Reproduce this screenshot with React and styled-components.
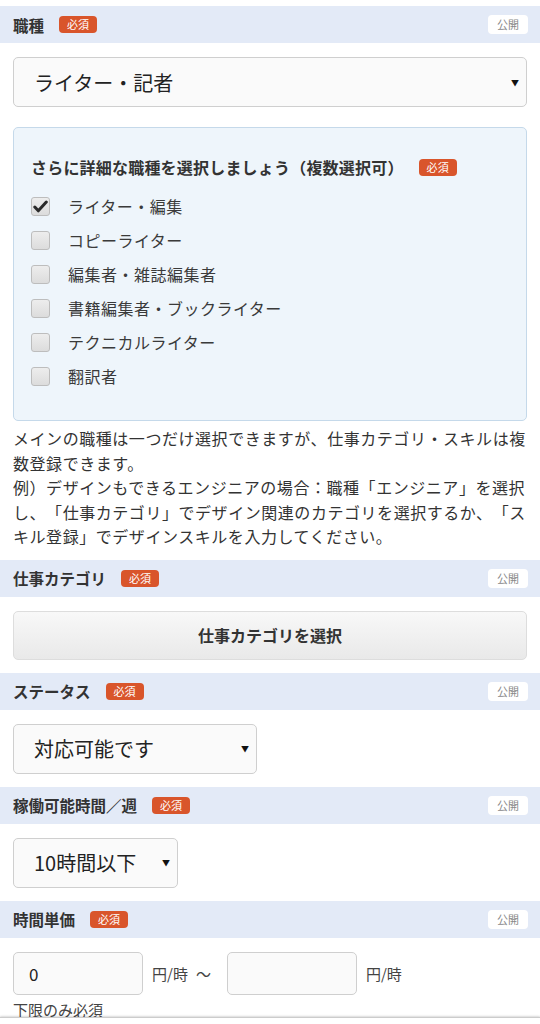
import React from "react";
import styled, { createGlobalStyle } from "styled-components";

const GlobalStyle = createGlobalStyle`
  body {
    margin: 0;
    background: #ffffff;
    font-family: "Noto Sans CJK JP", "Noto Sans", sans-serif;
    color: #333333;
    text-spacing-trim: space-all;
  }
`;

const jobs = [
  { label: "ライター・編集", checked: true },
  { label: "コピーライター" },
  { label: "編集者・雑誌編集者" },
  { label: "書籍編集者・ブックライター" },
  { label: "テクニカルライター" },
  { label: "翻訳者" },
];

const Section = ({ title, children }) => (
  <>
    <Header>
      <HeaderTitle>
        {title}
        <Required>必須</Required>
      </HeaderTitle>
      <PublicTag>公開</PublicTag>
    </Header>
    <Body>{children}</Body>
  </>
);

const App = () => {
  return (
    <Page>
      <GlobalStyle />
      <Section title="職種">
        <Select $width="100%">
          <span>ライター・記者</span>
          <Arrow>▼</Arrow>
        </Select>
        <DetailBox>
          <DetailTitle>
            さらに詳細な職種を選択しましょう（複数選択可）
            <Required>必須</Required>
          </DetailTitle>
          {jobs.map((job) => (
            <CheckRow key={job.label}>
              <CheckBox>
                {job.checked && (
                  <svg width="15" height="13" viewBox="0 0 15 13">
                    <path d="M1.8 7 L5.3 10.8 L13.3 2" fill="none" stroke="#2a2a2a" strokeWidth="3" strokeLinecap="round" strokeLinejoin="round" />
                  </svg>
                )}
              </CheckBox>
              {job.label}
            </CheckRow>
          ))}
        </DetailBox>
        <Note>
          メインの職種は一つだけ選択できますが、仕事カテゴリ・スキルは複数登録できます。
          <br />
          例）デザインもできるエンジニアの場合：職種「エンジニア」を選択し、「仕事カテゴリ」でデザイン関連のカテゴリを選択するか、「スキル登録」でデザインスキルを入力してください。
        </Note>
      </Section>

      <Section title="仕事カテゴリ">
        <CategoryButton>仕事カテゴリを選択</CategoryButton>
      </Section>

      <Section title="ステータス">
        <Select $width="244px">
          <span>対応可能です</span>
          <Arrow>▼</Arrow>
        </Select>
      </Section>

      <Section title="稼働可能時間／週">
        <Select $width="165px">
          <span>10時間以下</span>
          <Arrow>▼</Arrow>
        </Select>
      </Section>

      <Section title="時間単価">
        <PriceRow>
          <PriceInput>0</PriceInput>
          <Unit>円/時</Unit>
          <Tilde>〜</Tilde>
          <PriceInput />
          <Unit>円/時</Unit>
        </PriceRow>
        <SmallNote>下限のみ必須</SmallNote>
      </Section>
      <BottomBar />
    </Page>
  );
};

export default App;

const Page = styled.div`
  padding-top: 6px;
  width: 540px;
`;

const Header = styled.div`
  height: 37px;
  background-color: #e3eaf7;
  display: flex;
  align-items: center;
  justify-content: space-between;
  padding: 0 12px 0 13px;
  box-sizing: border-box;
`;

const HeaderTitle = styled.div`
  display: flex;
  align-items: center;
  font-size: 15.5px;
  font-weight: 700;
  color: #333333;
`;

const Required = styled.span`
  display: inline-block;
  margin-left: 15px;
  background-color: #d9552b;
  color: #ffffff;
  font-size: 11px;
  font-weight: 400;
  line-height: 17px;
  padding: 0 8px;
  border-radius: 4px;
`;

const PublicTag = styled.span`
  background-color: #ffffff;
  color: #888888;
  font-size: 11px;
  line-height: 19px;
  padding: 0 9px;
  border-radius: 4px;
`;

const Body = styled.div`
  padding: 14px 13px 13px;
`;

const Select = styled.div`
  width: ${(p) => p.$width};
  height: 50px;
  box-sizing: border-box;
  background-color: #fafafa;
  border: 1px solid #cfcfcf;
  border-radius: 5px;
  display: flex;
  align-items: center;
  justify-content: space-between;
  padding: 0 7px 0 20px;
  font-size: 20px;
  color: #222222;
`;

const Arrow = styled.span`
  font-size: 8px;
  color: #111111;
`;

const DetailBox = styled.div`
  margin-top: 20px;
  background-color: #eef5fb;
  border: 1px solid #c5d9ea;
  border-radius: 5px;
  padding: 28px 17px 27px;
`;

const DetailTitle = styled.div`
  display: flex;
  align-items: center;
  font-size: 16px;
  font-weight: 700;
  color: #333333;
  line-height: 22px;
  margin-bottom: 11px;
  letter-spacing: 0.2px;
`;

const CheckRow = styled.div`
  height: 34px;
  display: flex;
  align-items: center;
  font-size: 16px;
  letter-spacing: 0.5px;
  color: #3a3a3a;
`;

const CheckBox = styled.span`
  width: 19px;
  height: 19px;
  box-sizing: border-box;
  margin-right: 18px;
  border: 1px solid #bdbdbd;
  border-radius: 3px;
  background: linear-gradient(#ededed, #dcdcdc);
  display: flex;
  align-items: center;
  justify-content: center;
`;

const Note = styled.p`
  margin: 5px 0 -2px;
  font-size: 16px;
  letter-spacing: 0.55px;
  line-height: 24.6px;
  color: #333333;
`;

const CategoryButton = styled.div`
  height: 49px;
  box-sizing: border-box;
  border: 1px solid #dddddd;
  border-radius: 5px;
  background: linear-gradient(#f8f8f8, #e9e9e9);
  display: flex;
  align-items: center;
  justify-content: center;
  font-size: 16px;
  font-weight: 700;
  color: #333333;
`;

const PriceRow = styled.div`
  display: flex;
  align-items: center;
`;

const PriceInput = styled.div`
  width: 130px;
  height: 43px;
  box-sizing: border-box;
  border: 1px solid #cfcfcf;
  border-radius: 5px;
  background-color: #fafafa;
  display: flex;
  align-items: center;
  padding-left: 15px;
  font-size: 17px;
  color: #222222;
`;

const Unit = styled.span`
  margin-left: 9px;
  font-size: 15px;
  color: #444444;
`;

const Tilde = styled.span`
  margin: 0 16px 0 8px;
  font-size: 15px;
  color: #444444;
`;

const SmallNote = styled.div`
  margin-top: 4px;
  font-size: 15px;
  color: #444444;
`;

const BottomBar = styled.div`
  position: fixed;
  left: 0;
  right: 0;
  bottom: 0;
  height: 6px;
  background-color: #ffffff;
  border-top: 1px solid #cccccc;
  box-shadow: 0 -1px 2px rgba(0, 0, 0, 0.15);
`;
